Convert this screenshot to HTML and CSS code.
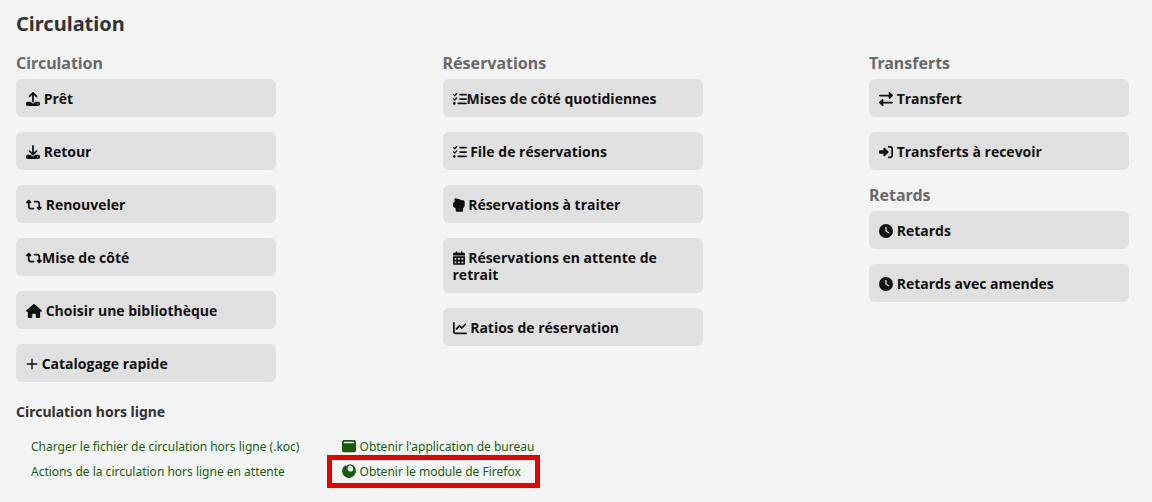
FILE: index.html
```
<!DOCTYPE html>
<html lang="fr">
<head>
    <meta charset="UTF-8">
    <meta name="viewport" content="width=device-width, initial-scale=1.0">
    <title>Circulation</title>
    <link rel="stylesheet" href="styles.css">
</head>
<body>
    <svg class="sprite" aria-hidden="true">
        <symbol id="retweet" viewBox="0 0 576 512"><path d="M272 416c17.7 0 32-14.3 32-32s-14.3-32-32-32H160c-17.7 0-32-14.3-32-32V192h32c12.9 0 24.6-7.8 29.6-19.8s2.2-25.7-6.9-34.9l-64-64c-12.5-12.5-32.8-12.5-45.3 0l-64 64c-9.2 9.2-11.9 22.9-6.9 34.9S19.1 192 32 192l32 0 0 128c0 53 43 96 96 96l112 0zM304 96c-17.7 0-32 14.3-32 32s14.3 32 32 32l112 0c17.7 0 32 14.3 32 32l0 128-32 0c-12.9 0-24.6 7.8-29.6 19.8s-2.2 25.7 6.9 34.9l64 64c12.5 12.5 32.8 12.5 45.3 0l64-64c9.2-9.2 11.9-22.9 6.9-34.9s-16.6-19.8-29.6-19.8l-32 0V192c0-53-43-96-96-96L304 96z"/></symbol>
        <symbol id="list-check" viewBox="0 0 512 512"><path d="M152.1 38.2c9.9 8.9 10.7 24 1.8 33.9l-72 80c-4.4 4.9-10.6 7.8-17.2 7.9s-12.9-2.4-17.6-7L7 113C-2.3 103.6-2.3 88.4 7 79s24.6-9.4 33.9 0l22.1 22.1 55.1-61.2c8.9-9.9 24-10.7 33.9-1.8zm0 160c9.9 8.9 10.7 24 1.8 33.9l-72 80c-4.4 4.9-10.6 7.8-17.2 7.9s-12.9-2.4-17.6-7L7 273c-9.4-9.4-9.4-24.6 0-33.9s24.6-9.4 33.9 0l22.1 22.1 55.1-61.2c8.9-9.9 24-10.7 33.9-1.8zM224 96c0-17.7 14.3-32 32-32H480c17.7 0 32 14.3 32 32s-14.3 32-32 32H256c-17.7 0-32-14.3-32-32zm0 160c0-17.7 14.3-32 32-32H480c17.7 0 32 14.3 32 32s-14.3 32-32 32H256c-17.7 0-32-14.3-32-32zM160 416c0-17.7 14.3-32 32-32H480c17.7 0 32 14.3 32 32s-14.3 32-32 32H192c-17.7 0-32-14.3-32-32zM48 368a48 48 0 1 1 0 96 48 48 0 1 1 0-96z"/></symbol>
        <symbol id="clock" viewBox="0 0 512 512"><path d="M256 0a256 256 0 1 1 0 512A256 256 0 1 1 256 0zM232 120V256c0 8 4 15.5 10.7 20l96 64c11 7.4 25.9 4.4 33.3-6.7s4.4-25.9-6.7-33.3L280 243.2V120c0-13.3-10.7-24-24-24s-24 10.7-24 24z"/></symbol>
    </svg>
    <main class="main">
        <h1>Circulation</h1>
        <div class="columns">
            <section>
                <h2>Circulation</h2>
                <ul class="buttons-list">
                    <li><a class="circ-button" href="#"><svg class="icon" viewBox="0 0 512 512"><path d="M288 109.3V352c0 17.7-14.3 32-32 32s-32-14.3-32-32V109.3l-73.4 73.4c-12.5 12.5-32.8 12.5-45.3 0s-12.5-32.8 0-45.3l128-128c12.5-12.5 32.8-12.5 45.3 0l128 128c12.5 12.5 12.5 32.8 0 45.3s-32.8 12.5-45.3 0L288 109.3zM64 352H192c0 35.3 28.7 64 64 64s64-28.7 64-64H448c35.3 0 64 28.7 64 64v32c0 35.3-28.7 64-64 64H64c-35.3 0-64-28.7-64-64V416c0-35.3 28.7-64 64-64zM432 456a24 24 0 1 0 0-48 24 24 0 1 0 0 48z"/></svg> Prêt</a></li>
                    <li><a class="circ-button" href="#"><svg class="icon" viewBox="0 0 512 512"><path d="M288 32c0-17.7-14.3-32-32-32s-32 14.3-32 32V274.7l-73.4-73.4c-12.5-12.5-32.8-12.5-45.3 0s-12.5 32.8 0 45.3l128 128c12.5 12.5 32.8 12.5 45.3 0l128-128c12.5-12.5 12.5-32.8 0-45.3s-32.8-12.5-45.3 0L288 274.7V32zM64 352c-35.3 0-64 28.7-64 64v32c0 35.3 28.7 64 64 64H448c35.3 0 64-28.7 64-64V416c0-35.3-28.7-64-64-64H346.5l-45.3 45.3c-25 25-65.5 25-90.5 0L165.5 352H64zm368 56a24 24 0 1 1 0 48 24 24 0 1 1 0-48z"/></svg> Retour</a></li>
                    <li><a class="circ-button" href="#"><svg class="icon icon-wide"><use href="#retweet"/></svg> Renouveler</a></li>
                    <li><a class="circ-button" href="#"><svg class="icon icon-wide"><use href="#retweet"/></svg>Mise de côté</a></li>
                    <li><a class="circ-button" href="#"><svg class="icon icon-wide" viewBox="0 0 576 512"><path d="M575.8 255.5c0 18-15 32.1-32 32.1h-32l.7 160.2c0 2.7-.2 5.4-.5 8.1V472c0 22.1-17.9 40-40 40H456c-1.1 0-2.2 0-3.3-.1c-1.4 .1-2.8 .1-4.2 .1H416 392c-22.1 0-40-17.9-40-40V448 384c0-17.7-14.3-32-32-32H256c-17.7 0-32 14.3-32 32v64 24c0 22.1-17.9 40-40 40H160 128.1c-1.5 0-3-.1-4.5-.2c-1.2 .1-2.4 .2-3.6 .2H104c-22.1 0-40-17.9-40-40V360c0-.9 0-1.9 .1-2.8V287.6H32c-18 0-32-14-32-32.1c0-9 3-17 10-24L266.4 8c7-7 15-8 22-8s15 2 21 7L564.8 231.5c8 7 12 15 11 24z"/></svg> Choisir une bibliothèque</a></li>
                    <li><a class="circ-button" href="#"><svg class="icon icon-narrow" viewBox="0 0 448 512"><path d="M250 80c0-34-52-34-52 0V230H48c-34 0-34 52 0 52H198V432c0 34 52 34 52 0V282H400c34 0 34-52 0-52H250V80z"/></svg> Catalogage rapide</a></li>
                </ul>
            </section>
            <section>
                <h2>Réservations</h2>
                <ul class="buttons-list">
                    <li><a class="circ-button" href="#"><svg class="icon"><use href="#list-check"/></svg>Mises de côté quotidiennes</a></li>
                    <li><a class="circ-button" href="#"><svg class="icon"><use href="#list-check"/></svg> File de réservations</a></li>
                    <li><a class="circ-button" href="#"><svg class="icon icon-narrow" viewBox="0 0 448 512"><path d="M96 0c25 0 38 14 44 30 12-10 48-12 62 12 24-12 54-4 64 20 24-10 50 0 60 20 62-8 112 10 112 60v108c0 60-22 92-64 132v98c0 18-14 32-32 32H134c-18 0-32-14-32-32v-84l-60-52c-32-24-42-50-42-82v-60c0-24 12-42 42-54l16 8V32C58 14 78 0 96 0z"/></svg> Réservations à traiter</a></li>
                    <li><a class="circ-button" href="#"><svg class="icon icon-narrow" viewBox="0 0 448 512"><path d="M128 0c17.7 0 32 14.3 32 32V64H288V32c0-17.7 14.3-32 32-32s32 14.3 32 32V64h48c26.5 0 48 21.5 48 48v48H0V112C0 85.500 21.5 64 48 64H96V32c0-17.7 14.3-32 32-32zM0 192H448V464c0 26.5-21.5 48-48 48H48c-26.5 0-48-21.5-48-48V192zm64 64v64h64v-64zm128 0v64h64v-64zm128 0v64h64v-64zM64 384v64h64v-64zm128 0v64h64v-64zm128 0v64h64v-64z" fill-rule="evenodd"/></svg> Réservations en attente de retrait</a></li>
                    <li><a class="circ-button" href="#"><svg class="icon" viewBox="0 0 512 512"><path d="M64 64c0-17.7-14.3-32-32-32S0 46.3 0 64V400c0 44.2 35.8 80 80 80H480c17.7 0 32-14.3 32-32s-14.3-32-32-32H80c-8.8 0-16-7.2-16-16V64zm406.6 86.6c12.5-12.5 12.5-32.8 0-45.3s-32.8-12.5-45.3 0L320 210.7l-57.4-57.4c-12.5-12.5-32.8-12.5-45.3 0l-112 112c-12.5 12.5-12.5 32.8 0 45.3s32.8 12.5 45.3 0L240 221.3l57.4 57.4c12.5 12.5 32.8 12.5 45.3 0l128-128z"/></svg> Ratios de réservation</a></li>
                </ul>
            </section>
            <section>
                <h2>Transferts</h2>
                <ul class="buttons-list">
                    <li><a class="circ-button" href="#"><svg class="icon" viewBox="0 0 512 512"><path d="M32 96l320 0V32c0-12.9 7.8-24.6 19.8-29.6s25.7-2.2 34.9 6.9l96 96c6 6 9.4 14.1 9.4 22.6s-3.4 16.6-9.4 22.6l-96 96c-9.2 9.2-22.9 11.9-34.9 6.9s-19.8-16.6-19.8-29.6V160L32 160c-17.7 0-32-14.3-32-32s14.3-32 32-32zM480 352c17.7 0 32 14.3 32 32s-14.3 32-32 32H160v64c0 12.9-7.8 24.6-19.8 29.6s-25.7 2.2-34.9-6.9l-96-96c-6-6-9.4-14.1-9.4-22.6s3.4-16.6 9.4-22.6l96-96c9.2-9.2 22.9-11.9 34.9-6.9s19.8 16.6 19.8 29.6l0 64H480z"/></svg> Transfert</a></li>
                    <li><a class="circ-button" href="#"><svg class="icon" viewBox="0 0 512 512"><path d="M217.9 105.9L340.7 228.7c7.2 7.2 11.3 17.1 11.3 27.3s-4.1 20.1-11.3 27.3L217.9 406.1c-6.4 6.4-15 9.9-24 9.9c-18.7 0-33.9-15.2-33.9-33.9l0-62.1L32 320c-17.7 0-32-14.3-32-32l0-64c0-17.7 14.3-32 32-32l128 0 0-62.1c0-18.7 15.2-33.9 33.9-33.9c9 0 17.6 3.6 24 9.9zM352 416l64 0c17.7 0 32-14.3 32-32l0-256c0-17.7-14.3-32-32-32l-64 0c-17.7 0-32-14.3-32-32s14.3-32 32-32l64 0c53 0 96 43 96 96l0 256c0 53-43 96-96 96l-64 0c-17.7 0-32-14.3-32-32s14.3-32 32-32z"/></svg> Transferts à recevoir</a></li>
                </ul>
                <h2>Retards</h2>
                <ul class="buttons-list">
                    <li><a class="circ-button" href="#"><svg class="icon"><use href="#clock"/></svg> Retards</a></li>
                    <li><a class="circ-button" href="#"><svg class="icon"><use href="#clock"/></svg> Retards avec amendes</a></li>
                </ul>
            </section>
        </div>
        <h3>Circulation hors ligne</h3>
        <div class="offline">
            <ul>
                <li><a href="#">Charger le fichier de circulation hors ligne (.koc)</a></li>
                <li><a href="#">Actions de la circulation hors ligne en attente</a></li>
            </ul>
            <ul>
                <li><a href="#"><svg class="icon" viewBox="0 0 512 512"><path d="M64 32H448c35 0 64 29 64 64V416c0 35-29 64-64 64H64c-35 0-64-29-64-64V96C0 61 29 32 64 32zM80 96c-24 0-24 56 0 56H432c24 0 24-56 0-56z" fill-rule="evenodd"/></svg> Obtenir l'application de bureau</a></li>
                <li><a class="highlight" href="#"><svg class="icon" viewBox="0 0 512 512"><path d="M130 40L150 90C190 35 260 0 320 10C440 40 512 140 506 260C500 405 390 508 256 508C115 508 6 400 6 260C6 170 50 100 90 65L105 85zM250 75L215 110L240 150C190 150 185 200 225 240C270 295 375 285 405 215C430 145 385 70 290 45z" fill-rule="evenodd"/></svg> Obtenir le module de Firefox</a></li>
            </ul>
        </div>
    </main>
</body>
</html>
```
FILE: styles.css
```
body {
    margin: 0;
    background-color: #f3f4f4;
    color: #333;
    font-family: "Noto Sans", "Open Sans", sans-serif;
    font-size: 12px;
}
.sprite {
    display: none;
}
.main {
    padding: 10px 23px 14px 16px;
}
h1, h2, h3, ul {
    margin: 0;
    padding: 0;
}
ul {
    list-style: none;
}
h1 {
    font-size: 20px;
    line-height: 28px;
}
h2 {
    color: #696969;
    font-size: 16px;
    line-height: 22px;
    padding-bottom: 5px;
}
h3 {
    font-size: 14px;
    line-height: 20px;
    margin-top: 20px;
}
.columns {
    display: grid;
    grid-template-columns: repeat(3, 260px);
    justify-content: space-between;
    margin-top: 14px;
}
.buttons-list {
    display: grid;
    gap: 15px;
}
.buttons-list + h2 {
    margin-top: 14px;
}
.circ-button {
    display: block;
    padding: 11px 10px 10px;
    border-radius: 6px;
    background-color: #e0e0e0;
    color: #111;
    font-family: "Open Sans", "Noto Sans", sans-serif;
    font-size: 14px;
    font-weight: 700;
    line-height: 17px;
    text-decoration: none;
}
.icon {
    width: 14px;
    height: 14px;
    fill: currentColor;
    vertical-align: -2px;
}
.icon-wide {
    width: 16px;
}
.icon-narrow {
    width: 12px;
}
.offline {
    display: flex;
    gap: 43px;
    margin: 12px 0 0 15px;
    line-height: 25px;
}
.offline a {
    color: #165e0b;
    text-decoration: none;
}
.offline .highlight {
    padding: 3px 14px 3px 10px;
    margin-left: -15px;
    border: 5px solid #e90000;
}
```
